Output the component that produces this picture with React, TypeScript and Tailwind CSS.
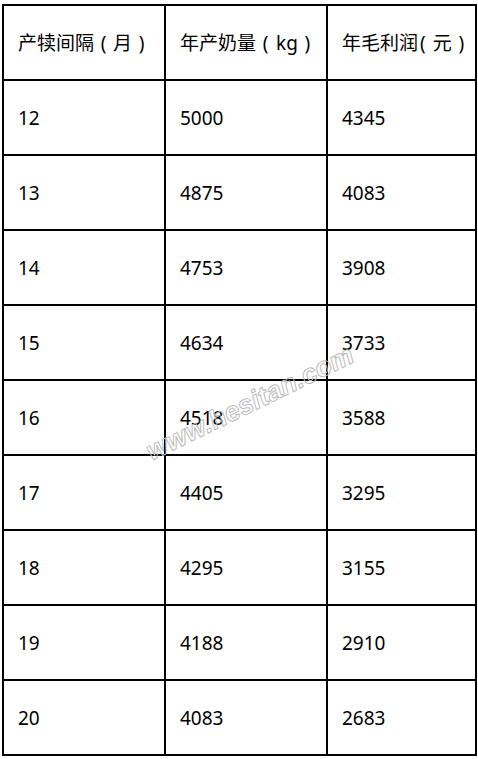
import React from "react";

const rows: [string, string, string][] = [
  ["12", "5000", "4345"],
  ["13", "4875", "4083"],
  ["14", "4753", "3908"],
  ["15", "4634", "3733"],
  ["16", "4518", "3588"],
  ["17", "4405", "3295"],
  ["18", "4295", "3155"],
  ["19", "4188", "2910"],
  ["20", "4083", "2683"],
];

function P({ c }: { c: string }) {
  return <span className="inline-block w-[19px] text-center">{c}</span>;
}

const header: React.ReactNode[] = [
  <>
    产犊间隔<P c="(" />月<P c=")" />
  </>,
  <>
    年产奶量<P c="(" />
    <span className="ml-[1px]">kg</span>
    <P c=")" />
  </>,
  <>
    年毛利润<span className="ml-[2px]">(</span>
    <span className="ml-[7px]">元</span>
    <P c=")" />
  </>,
];

export default function App() {
  return (
    <div className="relative w-[478px] h-[759px] bg-white overflow-hidden">
      <div
        className="ml-[2px] mt-[4px] w-fit grid grid-cols-[160px_160px_147px] auto-rows-[73px] gap-[2px] bg-black p-[2px] text-black text-[19px]"
        style={{ fontFamily: '"Noto Sans", "Noto Sans CJK SC", sans-serif' }}
      >
        {header.map((h, j) => (
          <div key={`h-${j}`} className="bg-white flex items-center pl-[14px] pt-[2px] whitespace-nowrap">
            {h}
          </div>
        ))}
        {rows.map((r, i) =>
          r.map((c, j) => (
            <div key={`${i}-${j}`} className="bg-white flex items-center pl-[14px] pt-[2px] whitespace-nowrap">
              {c}
            </div>
          ))
        )}
      </div>
      <div
        className="absolute left-[250px] top-[403px] -translate-x-1/2 -translate-y-1/2 rotate-[-26deg] whitespace-nowrap text-[27px] font-bold italic text-transparent [-webkit-text-stroke:1px_#bdbdbd]"
        style={{ fontFamily: '"Liberation Sans", Arial, sans-serif' }}
      >
        www.hesitan.com
      </div>
    </div>
  );
}
